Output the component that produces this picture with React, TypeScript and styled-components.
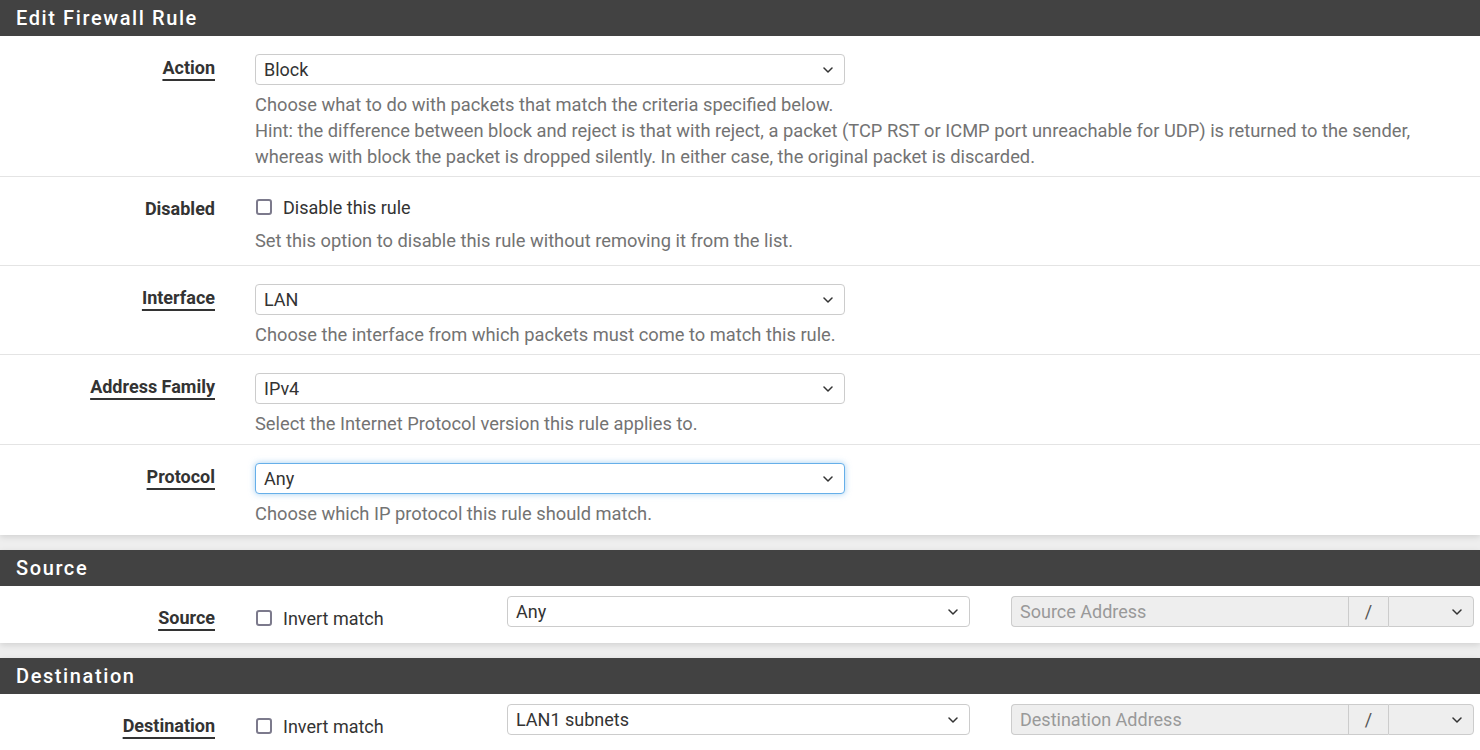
import React from 'react'
import styled, { createGlobalStyle, css } from 'styled-components'

const GlobalStyle = createGlobalStyle`
	html, body {
		margin: 0;
		padding: 0;
		background: #eeeeee;
		font-family: Roboto, "Liberation Sans", sans-serif;
		color: #333;
	}
	* { box-sizing: border-box; }
`

// small chevron used by every select
const Chevron = () => (
	<ChevronIcon width="10" height="6" viewBox="0 0 10 6">
		<polyline points="1,1 5,5 9,1" fill="none" stroke="#333" strokeWidth="1.5" strokeLinecap="round" strokeLinejoin="round" />
	</ChevronIcon>
)

type SelectProps = {
	value: string
	width?: string
	focused?: boolean
	disabled?: boolean
	grouped?: boolean
}

function Select({ value, width, focused, disabled, grouped }: SelectProps): JSX.Element {
	return (
		<SelectBox $width={width} $focused={focused} $disabled={disabled} $grouped={grouped}>
			<span>{value}</span>
			<Chevron />
		</SelectBox>
	)
}

function Checkbox({ label }: { label: string }): JSX.Element {
	return (
		<CheckLabel>
			<Box />
			{label}
		</CheckLabel>
	)
}

function AddressLine({ label, value, placeholder }: { label: string; value: string; placeholder: string }): JSX.Element {
	return (
		<AddressRow>
			<Label $required>{label}</Label>
			<CheckCell>
				<Checkbox label="Invert match" />
			</CheckCell>
			<Select value={value} width="463px" />
			<InputGroup>
				<AddressInput disabled placeholder={placeholder} />
				<Addon>/</Addon>
				<Select value="" width="86px" disabled grouped />
			</InputGroup>
		</AddressRow>
	)
}

export default function App(): JSX.Element {
	return (
		<>
			<GlobalStyle />
			<Page>
				<Panel>
					<PanelHeading>Edit Firewall Rule</PanelHeading>
					<Row>
						<Label $required>Action</Label>
						<Field>
							<Select value="Block" />
							<Help>
								Choose what to do with packets that match the criteria specified below.<br />
								Hint: the difference between block and reject is that with reject, a packet (TCP RST or ICMP port unreachable for UDP) is returned to the sender,
								whereas with block the packet is dropped silently. In either case, the original packet is discarded.
							</Help>
						</Field>
					</Row>
					<Row $bottom={11}>
						<Label>Disabled</Label>
						<Field>
							<Checkbox label="Disable this rule" />
							<Help $top={9}>Set this option to disable this rule without removing it from the list.</Help>
						</Field>
					</Row>
					<Row>
						<Label $required>Interface</Label>
						<Field>
							<Select value="LAN" />
							<Help>Choose the interface from which packets must come to match this rule.</Help>
						</Field>
					</Row>
					<Row $bottom={7}>
						<Label $required>Address Family</Label>
						<Field>
							<Select value="IPv4" />
							<Help>Select the Internet Protocol version this rule applies to.</Help>
						</Field>
					</Row>
					<Row $bottom={8}>
						<Label $required>Protocol</Label>
						<Field>
							<Select value="Any" focused />
							<Help>Choose which IP protocol this rule should match.</Help>
						</Field>
					</Row>
				</Panel>

				<Panel>
					<PanelHeading>Source</PanelHeading>
					<AddressLine label="Source" value="Any" placeholder="Source Address" />
				</Panel>

				<Panel>
					<PanelHeading>Destination</PanelHeading>
					<AddressLine label="Destination" value="LAN1 subnets" placeholder="Destination Address" />
				</Panel>
			</Page>
		</>
	)
}

const Page = styled.main`
	display: flex;
	flex-direction: column;
	gap: 15px;
	width: 1480px;
`
const Panel = styled.section`
	background: #fff;
	box-shadow: 0 2px 6px rgba(0, 0, 0, 0.12);
`
const PanelHeading = styled.h2`
	margin: 0;
	height: 36px;
	padding: 0 16px;
	display: flex;
	align-items: center;
	background: #424242;
	color: #fff;
	font-size: 20px;
	font-weight: 500;
	letter-spacing: 1.6px;
`
const Row = styled.div<{ $bottom?: number }>`
	display: grid;
	grid-template-columns: 215px 1fr;
	column-gap: 40px;
	padding: 18px 50px ${p => p.$bottom ?? 6}px 0;
	& + & {
		border-top: 1px solid #e4e4e4;
	}
`
const AddressRow = styled.div`
	display: flex;
	align-items: flex-start;
	padding: 10px 0 12px;
`
const CheckCell = styled.div`
	width: 252px;
	margin: 10px 0 0 40px;
`
const Label = styled.label<{ $required?: boolean }>`
	width: 215px;
	justify-self: end;
	align-self: start;
	text-align: right;
	font-size: 18px;
	font-weight: 700;
	line-height: 27px;
	color: #333;
	${p => p.$required && css`
		text-decoration: underline;
		text-underline-offset: 5px;
		text-decoration-thickness: 1.5px;
	`}
	${AddressRow} & {
		margin-top: 8px;
	}
`
const Field = styled.div`
	display: flex;
	flex-direction: column;
	align-items: flex-start;
`
const SelectBox = styled.div<{ $width?: string; $focused?: boolean; $disabled?: boolean; $grouped?: boolean }>`
	position: relative;
	display: flex;
	align-items: center;
	justify-content: space-between;
	flex-shrink: 0;
	width: ${p => p.$width ?? '590px'};
	height: 31px;
	padding: 0 8px;
	border: 1px solid #ccc;
	border-radius: 4px;
	background: ${p => (p.$disabled ? '#eee' : '#fff')};
	font-size: 18px;
	color: #333;
	${p => p.$focused && css`
		border-color: #66afe9;
		box-shadow: 0 0 6px rgba(102, 175, 233, 0.6);
	`}
	${p => p.$grouped && css`
		border-top-left-radius: 0;
		border-bottom-left-radius: 0;
	`}
`
const ChevronIcon = styled.svg`
	flex-shrink: 0;
	margin-right: 3px;
`
const Help = styled.p<{ $top?: number }>`
	margin: ${p => p.$top ?? 7}px 0 0;
	font-size: 18.3px;
	line-height: 26px;
	color: #737373;
`
const CheckLabel = styled.label`
	display: flex;
	align-items: center;
	gap: 11px;
	height: 24px;
	font-size: 18px;
	color: #333;
`
const Box = styled.span`
	width: 16px;
	height: 16px;
	margin-left: 1px;
	border: 2px solid #7c7a8c;
	border-radius: 3px;
	background: #fff;
`
const InputGroup = styled.div`
	display: flex;
	height: 31px;
	margin-left: 41px;
`
const AddressInput = styled.input`
	width: 337px;
	height: 31px;
	padding: 0 8px;
	border: 1px solid #ccc;
	border-right: none;
	border-radius: 4px 0 0 4px;
	background: #eee;
	font-family: inherit;
	font-size: 18px;
	&::placeholder {
		color: #999;
	}
`
const Addon = styled.span`
	width: 40px;
	display: flex;
	align-items: center;
	justify-content: center;
	border: 1px solid #ccc;
	border-right: none;
	background: #eee;
	font-size: 18px;
	color: #555;
`
